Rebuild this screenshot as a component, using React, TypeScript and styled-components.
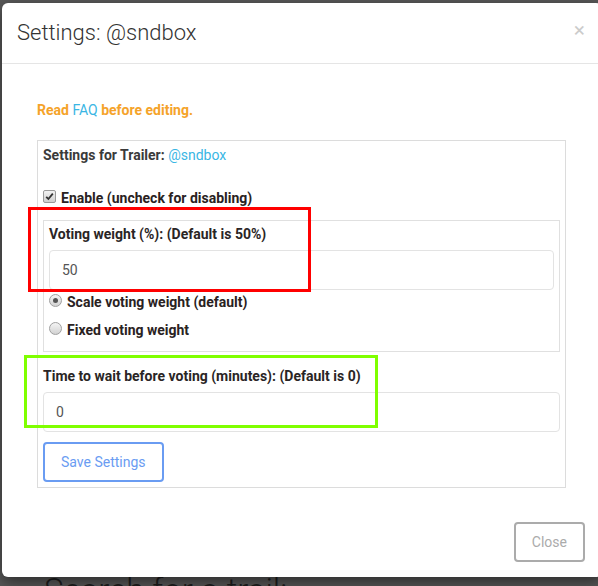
import React from "react";
import styled, { createGlobalStyle } from "styled-components";

const GlobalStyle = createGlobalStyle`
  html, body { margin: 0; padding: 0; }
  body {
    background: #585858;
    font-family: Roboto, "Liberation Sans", sans-serif;
    overflow: hidden;
  }
`;

const Page = styled.div`
  position: relative;
  width: 598px;
  height: 586px;
  overflow: hidden;
  background: #585858;
`;

const BehindHeading = styled.h2`
  margin: 0;
  padding: 571px 0 0 44px;
  font-size: 33px;
  font-weight: 300;
  color: #1e1e1e;
  white-space: nowrap;
`;

const Modal = styled.div`
  position: absolute;
  left: 2px;
  top: 3px;
  width: 600px;
  background: #fff;
  border-radius: 6px;
  box-shadow: 0 5px 15px rgba(0, 0, 0, 0.5);
  display: flex;
  flex-direction: column;
`;

const Header = styled.div`
  display: flex;
  justify-content: space-between;
  align-items: flex-start;
  padding: 15px;
  border-bottom: 1px solid #e5e5e5;
`;

const Title = styled.h4`
  margin: 0;
  font-size: 22px;
  font-weight: 300;
  line-height: 30px;
  color: #333;
`;

const CloseX = styled.span`
  font-size: 21px;
  font-weight: 400;
  line-height: 20px;
  color: #000;
  opacity: 0.2;
  margin-top: 2px;
  margin-right: 2px;
`;

const Body = styled.div`
  padding: 36px 36px 19px 35px;
  display: flex;
  flex-direction: column;
`;

const Notice = styled.p`
  margin: 0 0 20px;
  font-size: 14px;
  line-height: 20px;
  font-weight: 700;
  color: #f5a32a;
`;

const Link = styled.span`
  color: #3ab6e4;
  font-weight: 400;
`;

const Panel = styled.div`
  border: 1px solid #dcdcdc;
  padding: 4px 5px 5px 5px;
  display: flex;
  flex-direction: column;
`;

const Heading = styled.div`
  font-size: 14px;
  line-height: 20px;
  font-weight: 700;
  color: #3a3a3a;
  margin-bottom: 23px;
`;

const CheckRow = styled.label`
  display: flex;
  align-items: center;
  gap: 5px;
  font-size: 14px;
  line-height: 20px;
  font-weight: 700;
  color: #2a2222;
  margin-bottom: 12px;
`;

const CheckBox = styled.span`
  width: 11px;
  height: 11px;
  border: 1px solid #9a9a9a;
  border-radius: 2px;
  background: linear-gradient(#f2f2f2, #cfcfcf);
  display: flex;
  align-items: center;
  justify-content: center;
  margin-top: -3px;
`;

const Fieldset = styled.div`
  border: 1px solid #e0e0e0;
  padding: 3px 5px 11px 5px;
  display: flex;
  flex-direction: column;
  margin-bottom: 14px;
`;

const FieldLabel = styled.div`
  font-size: 14px;
  line-height: 20px;
  font-weight: 700;
  color: #2a2525;
  margin-bottom: 6px;
`;

const Input = styled.div<{ $mb?: number }>`
  height: 38px;
  border: 1px solid #e3e3e3;
  border-radius: 4px;
  display: flex;
  align-items: center;
  padding-left: 12px;
  font-size: 14px;
  color: #555;
  margin-bottom: ${(p) => p.$mb ?? 0}px;
`;

const RadioRow = styled.label<{ $mb?: number }>`
  display: flex;
  align-items: center;
  gap: 5px;
  font-size: 14px;
  line-height: 20px;
  font-weight: 700;
  color: #2a2222;
  margin-bottom: ${(p) => p.$mb ?? 0}px;
`;

const Radio = styled.span<{ $on?: boolean }>`
  width: 11px;
  height: 11px;
  border-radius: 50%;
  border: 1px solid #a0a0a0;
  background: linear-gradient(#f4f4f4, #d2d2d2);
  display: flex;
  align-items: center;
  justify-content: center;
  margin-top: -3px;
  &::after {
    content: "";
    width: 5px;
    height: 5px;
    border-radius: 50%;
    background: ${(p) => (p.$on ? "#555" : "transparent")};
  }
`;

const OutlineButton = styled.button<{ $tone: "blue" | "gray" }>`
  height: 40px;
  box-sizing: border-box;
  border: 2px solid ${(p) => (p.$tone === "blue" ? "#6a9cf2" : "#ababab")};
  color: ${(p) => (p.$tone === "blue" ? "#6a9cf2" : "#ababab")};
  background: #fff;
  border-radius: 4px;
  font-family: Roboto, "Liberation Sans", sans-serif;
  font-size: 14px;
  padding: 0 16px;
`;

const SaveRow = styled.div`
  margin-top: 10px;
  display: flex;
`;

const Footer = styled.div`
  display: flex;
  justify-content: flex-end;
  padding: 15px 17px 15px 15px;
`;

const Annotation = styled.div<{ $color: string }>`
  position: absolute;
  border: 3px solid ${(p) => p.$color};
  box-sizing: border-box;
  pointer-events: none;
`;

export default function App() {
  return (
    <>
      <GlobalStyle />
      <Page>
        <BehindHeading>Search for a trail:</BehindHeading>
        <Modal>
          <Header>
            <Title>Settings: @sndbox</Title>
            <CloseX>×</CloseX>
          </Header>
          <Body>
            <Notice>
              Read <Link>FAQ</Link> before editing.
            </Notice>
            <Panel>
              <Heading>
                Settings for Trailer: <Link>@sndbox</Link>
              </Heading>
              <CheckRow>
                <CheckBox>
                  <svg width="9" height="9" viewBox="0 0 9 9">
                    <path d="M1.2 4.8 L3.4 7 L7.8 1.6" fill="none" stroke="#333" strokeWidth="1.8" />
                  </svg>
                </CheckBox>
                Enable (uncheck for disabling)
              </CheckRow>
              <Fieldset>
                <FieldLabel>Voting weight (%): (Default is 50%)</FieldLabel>
                <Input $mb={2}>50</Input>
                <RadioRow $mb={8}>
                  <Radio $on />
                  Scale voting weight (default)
                </RadioRow>
                <RadioRow>
                  <Radio />
                  Fixed voting weight
                </RadioRow>
              </Fieldset>
              <FieldLabel>Time to wait before voting (minutes): (Default is 0)</FieldLabel>
              <Input>0</Input>
              <SaveRow>
                <OutlineButton $tone="blue">Save Settings</OutlineButton>
              </SaveRow>
            </Panel>
          </Body>
          <Footer>
            <OutlineButton $tone="gray">Close</OutlineButton>
          </Footer>
        </Modal>
        <Annotation $color="#ff0000" style={{ left: 28, top: 207, width: 283, height: 85 }} />
        <Annotation $color="#7fff00" style={{ left: 24, top: 355, width: 354, height: 73 }} />
      </Page>
    </>
  );
}
